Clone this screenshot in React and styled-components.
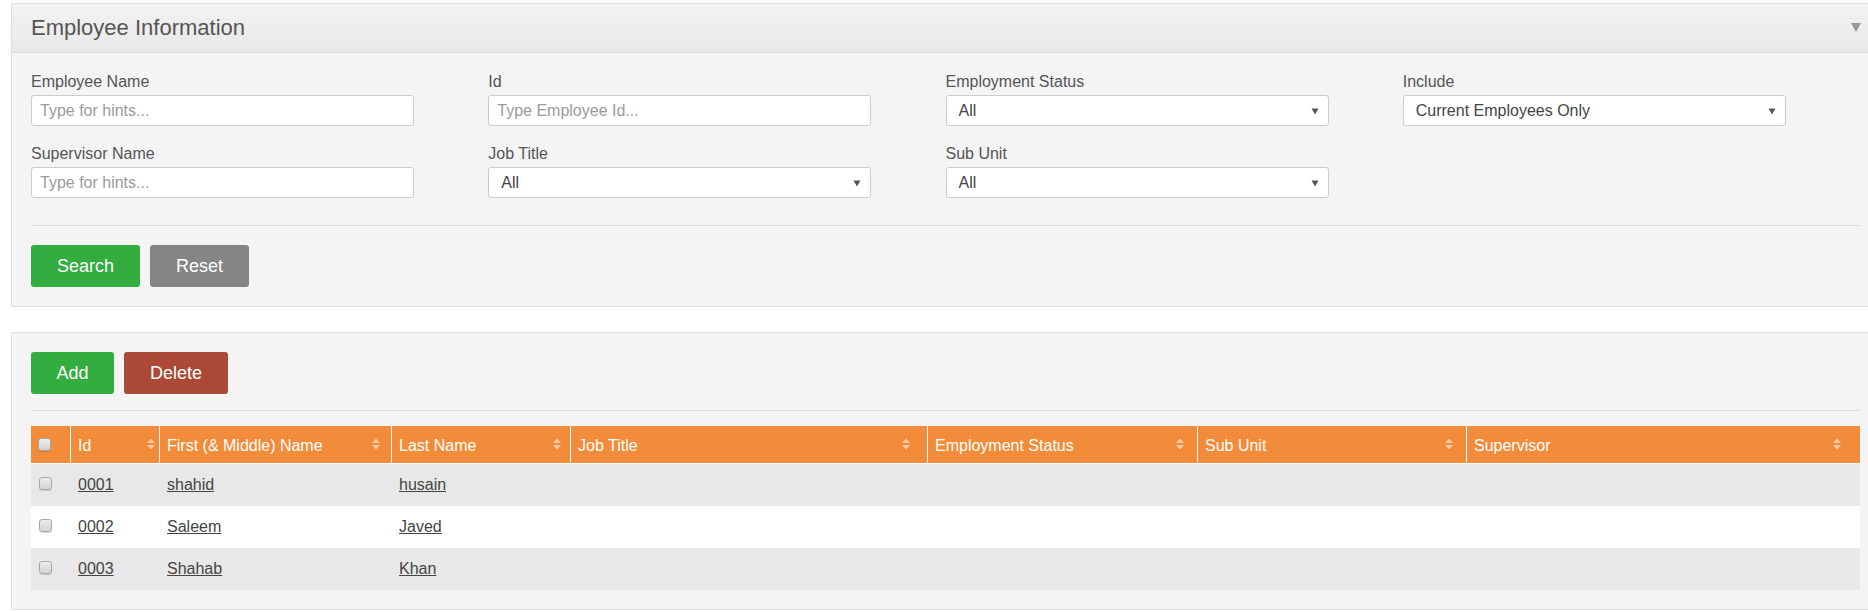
import React from "react";
import styled, { createGlobalStyle } from "styled-components";

const GlobalStyle = createGlobalStyle`
  html, body { margin: 0; padding: 0; background: #ffffff; overflow: hidden; }
  body { font-family: "Liberation Sans", Arial, sans-serif; color: #555; }
  * { box-sizing: border-box; }
`;

const Page = styled.div`
  min-width: 1891px;
  padding: 3px 11px 0 11px;
  display: flex;
  flex-direction: column;
  gap: 25px;
`;

const Panel = styled.section`
  background: #f4f4f4;
  border: 1px solid #dedede;
  border-radius: 2px;
`;

const PanelHead = styled.div`
  height: 49px;
  padding: 0 19px 0 19px;
  display: flex;
  align-items: center;
  justify-content: space-between;
  background: linear-gradient(#f3f3f3, #e8e8e8);
  border-bottom: 1px solid #dadada;
`;

const Title = styled.h1`
  margin: 0;
  font-size: 22px;
  font-weight: normal;
  color: #555;
  line-height: 26px;
`;

const Collapse = styled.svg`
  width: 10px;
  height: 9px;
  margin-right: -1px;
  margin-top: -1px;
`;

const PanelBody = styled.div`
  padding: 19px 19px 19px;
`;

const FormGrid = styled.div`
  display: grid;
  grid-template-columns: repeat(4, 1fr);
  row-gap: 18px;
`;

const Field = styled.div`
  display: flex;
  flex-direction: column;
  gap: 3px;
  width: 383px;
`;

const Label = styled.label`
  font-size: 16px;
  line-height: 20px;
  color: #555;
`;

const TextInput = styled.input`
  height: 31px;
  width: 100%;
  border: 1px solid #ccc;
  border-radius: 3px;
  background: #fff;
  padding: 0 8px;
  font-family: "Liberation Sans", Arial, sans-serif;
  font-size: 16px;
  color: #444;
  outline: none;
  &::placeholder { color: #9a9a9a; }
`;

const SelectWrap = styled.div`
  position: relative;
  width: 100%;
`;

const Select = styled.select`
  appearance: none;
  -webkit-appearance: none;
  height: 31px;
  width: 100%;
  border: 1px solid #ccc;
  border-radius: 3px;
  background: #fff;
  padding: 0 12px;
  font-family: "Liberation Sans", Arial, sans-serif;
  font-size: 16px;
  color: #444;
  outline: none;
`;

const SelectArrow = styled.svg`
  position: absolute;
  right: 10px;
  top: 12px;
  width: 8px;
  height: 8px;
  pointer-events: none;
`;

const Divider = styled.hr`
  border: 0;
  border-top: 1px solid #dcdcdc;
  margin: ${(p) => p.$top}px 0 ${(p) => p.$bottom}px;
`;

const ButtonRow = styled.div`
  display: flex;
  gap: 10px;
`;

const Button = styled.button`
  height: 42px;
  width: ${(p) => p.$w}px;
  border: 0;
  border-radius: 3px;
  background: ${(p) => p.$bg};
  color: #fff;
  font-family: "Liberation Sans", Arial, sans-serif;
  font-size: 18px;
  padding: 0;
  cursor: pointer;
`;

const Table = styled.table`
  width: 100%;
  border-collapse: separate;
  border-spacing: 0;
  table-layout: fixed;
`;

const HeadCell = styled.th`
  background: #f28c3a;
  color: #fff;
  font-weight: normal;
  font-size: 16px;
  text-align: left;
  height: 38px;
  padding: 2px 0 0 7px;
  border-left: ${(p) => (p.$first ? "0" : "1px solid #fff")};
  border-bottom: 1px solid #fff;
  vertical-align: middle;
`;

const HeadInner = styled.div`
  display: flex;
  align-items: center;
`;

const SortIcon = styled.svg`
  width: 8px;
  height: 12px;
  margin-left: auto;
  margin-right: 5%;
  flex-shrink: 0;
  margin-top: -3px;
`;

const Row = styled.tr`
  background: ${(p) => (p.$odd ? "#e8e8e8" : "#ffffff")};
`;

const Cell = styled.td`
  height: 42px;
  padding: 0 0 0 7px;
  font-size: 16px;
  color: #444;
  vertical-align: middle;
  border-left: ${(p) => (p.$first ? "0" : "1px solid transparent")};
`;

const CheckCell = styled(Cell)`
  padding-left: 8px;
`;

const Check = styled.span`
  display: block;
  width: 13px;
  height: 13px;
  border: 1px solid #a8a8a8;
  border-radius: 3px;
  background: linear-gradient(#ececec, #d2d2d2);
  box-shadow: 0 1px 1px rgba(0, 0, 0, 0.15);
  margin-top: ${(p) => (p.$head ? "-2px" : "-3px")};
`;

const Link = styled.a`
  color: #444;
  text-decoration: underline;
  cursor: pointer;
`;

const Arrow = () => (
  <SelectArrow viewBox="0 0 8 8">
    <path d="M0.5 1.5 L7.5 1.5 L4 7.5 Z" fill="#555" />
  </SelectArrow>
);

const Sort = () => (
  <SortIcon viewBox="0 0 8 12">
    <path d="M0 5 L4 0.5 L8 5 Z" fill="rgba(255,255,255,0.55)" />
    <path d="M0 7 L8 7 L4 11.5 Z" fill="rgba(255,255,255,0.55)" />
  </SortIcon>
);

const columns = [
  { key: "check", w: 39 },
  { key: "id", w: 89, label: "Id" },
  { key: "first", w: 232, label: "First (& Middle) Name" },
  { key: "last", w: 179, label: "Last Name" },
  { key: "job", w: 357, label: "Job Title" },
  { key: "status", w: 270, label: "Employment Status" },
  { key: "sub", w: 269, label: "Sub Unit" },
  { key: "sup", w: 394, label: "Supervisor" },
];

const employees = [
  { id: "0001", first: "shahid", last: "husain" },
  { id: "0002", first: "Saleem", last: "Javed" },
  { id: "0003", first: "Shahab", last: "Khan" },
];

function SelectField({ label, value }) {
  return (
    <Field>
      <Label>{label}</Label>
      <SelectWrap>
        <Select defaultValue={value}>
          <option>{value}</option>
        </Select>
        <Arrow />
      </SelectWrap>
    </Field>
  );
}

function InputField({ label, placeholder }) {
  return (
    <Field>
      <Label>{label}</Label>
      <TextInput placeholder={placeholder} />
    </Field>
  );
}

export default function App() {
  return (
    <>
      <GlobalStyle />
      <Page>
        <Panel>
          <PanelHead>
            <Title>Employee Information</Title>
            <Collapse viewBox="0 0 10 9">
              <path d="M0 0 L10 0 L5 9 Z" fill="#9a9a9a" />
            </Collapse>
          </PanelHead>
          <PanelBody>
            <FormGrid>
              <InputField label="Employee Name" placeholder="Type for hints..." />
              <InputField label="Id" placeholder="Type Employee Id..." />
              <SelectField label="Employment Status" value="All" />
              <SelectField label="Include" value="Current Employees Only" />
              <InputField label="Supervisor Name" placeholder="Type for hints..." />
              <SelectField label="Job Title" value="All" />
              <SelectField label="Sub Unit" value="All" />
            </FormGrid>
            <Divider $top={27} $bottom={19} />
            <ButtonRow>
              <Button $w={109} $bg="#33ac40">Search</Button>
              <Button $w={99} $bg="#858585">Reset</Button>
            </ButtonRow>
          </PanelBody>
        </Panel>

        <Panel>
          <PanelBody>
            <ButtonRow>
              <Button $w={83} $bg="#33ac40">Add</Button>
              <Button $w={104} $bg="#aa4936">Delete</Button>
            </ButtonRow>
            <Divider $top={16} $bottom={15} />
            <Table>
              <colgroup>
                {columns.map((c) => (
                  <col key={c.key} style={{ width: c.w }} />
                ))}
              </colgroup>
              <thead>
                <tr>
                  {columns.map((c) =>
                    c.key === "check" ? (
                      <HeadCell key={c.key} $first>
                        <Check $head />
                      </HeadCell>
                    ) : (
                      <HeadCell key={c.key}>
                        <HeadInner>
                          <span>{c.label}</span>
                          <Sort />
                        </HeadInner>
                      </HeadCell>
                    )
                  )}
                </tr>
              </thead>
              <tbody>
                {employees.map((e, i) => (
                  <Row key={e.id} $odd={i % 2 === 0}>
                    <CheckCell $first>
                      <Check />
                    </CheckCell>
                    <Cell><Link>{e.id}</Link></Cell>
                    <Cell><Link>{e.first}</Link></Cell>
                    <Cell><Link>{e.last}</Link></Cell>
                    <Cell />
                    <Cell />
                    <Cell />
                    <Cell />
                  </Row>
                ))}
              </tbody>
            </Table>
          </PanelBody>
        </Panel>
      </Page>
    </>
  );
}
